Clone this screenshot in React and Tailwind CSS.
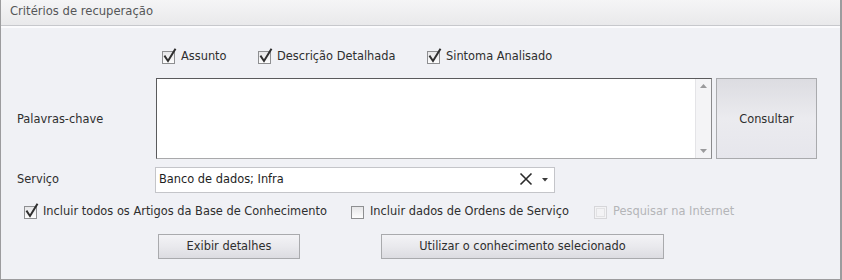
import React from "react";

const font = { fontFamily: '"DejaVu Sans", Verdana, sans-serif' };

function Check({ checked, disabled }) {
  return (
    <span className="relative inline-block w-[13px] h-[13px] shrink-0">
      <span
        className={
          "absolute inset-0 border " +
          (disabled
            ? "border-[#d6d6d9] bg-[#f3f3f5]"
            : "border-[#8e8f91] bg-gradient-to-b from-[#e6e6e8] to-[#fdfdfd]")
        }
      />
      {disabled && <span className="absolute left-[2px] top-[2px] w-[9px] h-[9px] border border-[#e2e2e4]" />}
      {checked && (
        <svg className="absolute left-[1px] top-[-3px]" width="14" height="15" viewBox="0 0 14 15">
          <path d="M2 8.5 L5 13 L12 1.5" fill="none" stroke="#2f2f2f" strokeWidth="2" strokeLinecap="square" />
        </svg>
      )}
    </span>
  );
}

function CheckItem({ checked, disabled, label, className = "" }) {
  return (
    <div className={"flex items-center gap-[6px] " + className}>
      <Check checked={checked} disabled={disabled} />
      <span className={disabled ? "text-[#b4b5b8]" : "text-[#2e2e2e]"}>{label}</span>
    </div>
  );
}

function Button({ children, className = "" }) {
  return (
    <div
      className={
        "flex items-center justify-center border border-[#a9aaad] bg-gradient-to-b text-[#2e2e2e] " +
        className
      }
    >
      {children}
    </div>
  );
}

export default function App() {
  return (
    <div
      className="w-[842px] h-[280px] flex flex-col bg-[#f0f1f5] border-l border-b border-r-2 border-[#9c9c9e] text-[11.4px] overflow-hidden"
      style={font}
    >
      <div className="h-[26px] shrink-0 flex items-center pl-[9px] pb-[2px] bg-gradient-to-b from-[#f5f5f6] to-[#e9e9eb] border-b border-[#c7c8cc] text-[#555658] text-[11.6px]">
        Critérios de recuperação
      </div>
      <div className="h-[2px] shrink-0 bg-[#fbfbfd]" />
      <div className="flex-1 flex flex-col">
        <div className="flex items-center h-[14px] mt-[22px] pl-[161px] gap-0">
          <CheckItem checked label="Assunto" className="w-[96px]" />
          <CheckItem checked label="Descrição Detalhada" className="w-[169px]" />
          <CheckItem checked label="Sintoma Analisado" />
        </div>
        <div className="flex items-center mt-[14px] h-[81px]">
          <div className="w-[155px] pl-[16px] pt-[2px] text-[#2e2e2e]">Palavras-chave</div>
          <div className="w-[556px] h-full flex bg-white border border-t-[#5a5a5c] border-l-[#5a5a5c] border-r-[#8a8a8c] border-b-[#a9a9ab]">
            <div className="flex-1" />
            <div className="w-[16px] h-full flex flex-col items-center justify-between py-[5px] bg-[#f4f4f6] border-l border-[#e4e4e7]">
              <svg width="7" height="4" viewBox="0 0 7 4"><path d="M0 4 L3.5 0 L7 4Z" fill="#9a9a9c" /></svg>
              <svg width="7" height="4" viewBox="0 0 7 4"><path d="M0 0 L3.5 4 L7 0Z" fill="#9a9a9c" /></svg>
            </div>
          </div>
          <Button className="ml-[4px] w-[101px] h-full from-[#dcdce1] via-[#ebebef] to-[#e6e6ec]">
            <span className="mt-[3px]">Consultar</span>
          </Button>
        </div>
        <div className="flex items-center mt-[8px] h-[26px]">
          <div className="w-[154px] pl-[16px] text-[#2e2e2e]">Serviço</div>
          <div className="w-[400px] h-full flex items-center bg-white border border-[#c4c5c9] pl-[3px] pr-[6px] text-[#1e1e1e]">
            <span className="flex-1">Banco de dados; Infra</span>
            <svg width="14" height="14" viewBox="0 0 14 14" className="mr-[9px] mt-[-2px]">
              <path d="M1.5 1.5 L12.5 12.5 M12.5 1.5 L1.5 12.5" stroke="#2a2a2a" strokeWidth="1.6" />
            </svg>
            <svg width="6" height="4" viewBox="0 0 6 4">
              <path d="M0 0 L3 3.5 L6 0Z" fill="#3a3a3a" />
            </svg>
          </div>
        </div>
        <div className="flex items-center mt-[12px] h-[14px] pl-[23px]">
          <CheckItem checked label="Incluir todos os Artigos da Base de Conhecimento" className="w-[327px]" />
          <CheckItem label="Incluir dados de Ordens de Serviço" className="w-[243px]" />
          <CheckItem disabled label="Pesquisar na Internet" />
        </div>
        <div className="flex items-center mt-[15px] h-[25px]">
          <Button className="ml-[157px] w-[142px] h-full from-[#f3f3f6] via-[#e9e9ed] to-[#dcdce1]">Exibir detalhes</Button>
          <Button className="ml-[81px] w-[283px] h-full from-[#f3f3f6] via-[#e9e9ed] to-[#dcdce1]">Utilizar o conhecimento selecionado</Button>
        </div>
      </div>
    </div>
  );
}
